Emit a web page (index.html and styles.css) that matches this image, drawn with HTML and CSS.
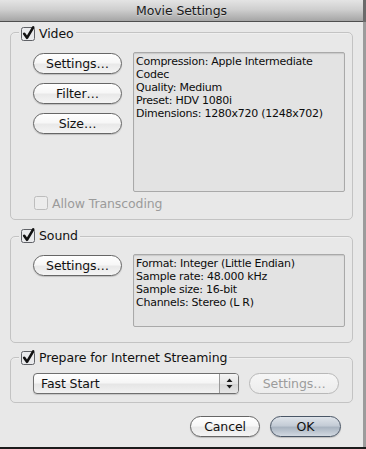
FILE: index.html
```html
<!DOCTYPE html>
<html>
<head>
<meta charset="utf-8">
<link rel="stylesheet" href="styles.css">
</head>
<body>
<div class="screen">
  <div class="window">
    <div class="titlebar">Movie Settings</div>
    <div class="content">
      <div class="group group-video">
        <div class="legend">
          <svg class="cb" width="14" height="14" viewBox="0 0 14 14"><rect x="0.5" y="0.5" width="13" height="13" rx="2" class="cb-box"/><path d="M3.2 6.8 L6 10.8 L12.2 0.4" class="cb-check"/></svg>
          <span class="legend-text">Video</span>
        </div>
        <div class="row">
          <div class="btncol">
            <div class="btn">Settings…</div>
            <div class="btn">Filter…</div>
            <div class="btn">Size…</div>
          </div>
          <div class="info info-video">Compression: Apple Intermediate<br>Codec<br>Quality: Medium<br>Preset: HDV 1080i<br>Dimensions: 1280x720 (1248x702)</div>
        </div>
        <div class="check disabled">
          <svg class="cb" width="14" height="14" viewBox="0 0 14 14"><rect x="0.5" y="0.5" width="13" height="13" rx="2" class="cb-box-dis"/></svg>
          <span>Allow Transcoding</span>
        </div>
      </div>

      <div class="group group-sound">
        <div class="legend">
          <svg class="cb" width="14" height="14" viewBox="0 0 14 14"><rect x="0.5" y="0.5" width="13" height="13" rx="2" class="cb-box"/><path d="M3.2 6.8 L6 10.8 L12.2 0.4" class="cb-check"/></svg>
          <span class="legend-text">Sound</span>
        </div>
        <div class="row">
          <div class="btncol">
            <div class="btn">Settings…</div>
          </div>
          <div class="info info-sound">Format: Integer (Little Endian)<br>Sample rate: 48.000 kHz<br>Sample size: 16-bit<br>Channels: Stereo (L R)</div>
        </div>
      </div>

      <div class="group group-stream">
        <div class="legend">
          <svg class="cb" width="14" height="14" viewBox="0 0 14 14"><rect x="0.5" y="0.5" width="13" height="13" rx="2" class="cb-box"/><path d="M3.2 6.8 L6 10.8 L12.2 0.4" class="cb-check"/></svg>
          <span class="legend-text">Prepare for Internet Streaming</span>
        </div>
        <div class="stream-row">
          <div class="popup">
            <span class="popup-label">Fast Start</span>
            <span class="popup-arrows">
              <svg width="7" height="11" viewBox="0 0 7 11"><path d="M3.5 0.5 L6.5 4 L0.5 4 Z M0.5 7 L6.5 7 L3.5 10.5 Z" fill="#1a1a1a"/></svg>
            </span>
          </div>
          <div class="btn btn-disabled">Settings…</div>
        </div>
      </div>

      <div class="actions">
        <div class="btn btn-cancel">Cancel</div>
        <div class="btn btn-ok">OK</div>
      </div>
    </div>
  </div>
  <div class="bottom-edge"></div>
</div>
</body>
</html>
```

FILE: styles.css
```css
* { box-sizing: border-box; }

html, body {
  margin: 0;
  padding: 0;
}

body {
  width: 366px;
  height: 449px;
  overflow: hidden;
  background: linear-gradient(to bottom, #6a6a6a 0, #6a6a6a 22px, #9c9c9c 22px, #9c9c9c 100%);
  font-family: "DejaVu Sans", sans-serif;
  color: #111;
}

.screen {
  display: flex;
  flex-direction: column;
  height: 449px;
}

.window {
  width: 363px;
  height: 447px;
  background: #e8e8e8;
  display: flex;
  flex-direction: column;
}

.bottom-edge {
  height: 2px;
  background: #1c1c1c;
}

.titlebar {
  height: 22px;
  border-bottom: 1px solid #4f4f4f;
  background: linear-gradient(to bottom, #e4e4e4 0%, #cfcfcf 45%, #a5a5a5 100%);
  text-align: center;
  font-size: 12.5px;
  letter-spacing: -0.1px;
  line-height: 21px;
  color: #1a1a1a;
  text-shadow: 0 1px 0 rgba(255, 255, 255, 0.35);
}

.content {
  padding: 0 10px 0 10px;
  display: flex;
  flex-direction: column;
}

.group {
  border: 1px solid #c3c3c3;
  border-radius: 5px;
  padding: 0 7px 0 22px;
  display: flex;
  flex-direction: column;
  box-shadow: inset 0 1px 0 rgba(255,255,255,0.3);
}

.group-video { margin-top: 10px; padding-bottom: 9px; }
.group-sound { margin-top: 16px; padding-bottom: 15px; }
.group-stream { margin-top: 14px; padding-bottom: 8px; padding-right: 13px; }

.legend {
  align-self: flex-start;
  display: flex;
  align-items: center;
  height: 14px;
  margin-left: -14px;
  padding: 0 2px;
  background: #e8e8e8;
  font-size: 12.5px;
  letter-spacing: -0.1px;
}

.group-video .legend { margin-top: -6px; }
.group-sound .legend { margin-top: -8px; }
.group-stream .legend { margin-top: -7px; }

.legend-text {
  margin-left: 4px;
  line-height: 14px;
}

.cb {
  display: block;
  overflow: visible;
  flex: none;
}

.cb-box {
  fill: #e9eaec;
  stroke: #5f6166;
  stroke-width: 1;
}

.cb-box-dis {
  fill: #ececec;
  stroke: #bdbdbd;
  stroke-width: 1;
}

.cb-check {
  fill: none;
  stroke: #111;
  stroke-width: 2.6;
  stroke-linecap: round;
  stroke-linejoin: round;
}

.row {
  display: flex;
  gap: 11px;
  margin-top: 11px;
}

.btncol {
  width: 89px;
  display: flex;
  flex-direction: column;
  gap: 9px;
  padding-top: 1px;
}

.btn {
  height: 21px;
  border: 1px solid #666;
  border-radius: 11px;
  background: linear-gradient(to bottom, #ffffff 0%, #f7f7f7 45%, #e9e9e9 55%, #f4f4f4 100%);
  box-shadow: 0 1px 1px rgba(0, 0, 0, 0.18);
  font-size: 12.5px;
  letter-spacing: -0.1px;
  line-height: 19px;
  text-align: center;
  color: #111;
}

.info {
  width: 212px;
  border: 1px solid #a9a9a9;
  border-radius: 2px;
  background: #e3e3e3;
  box-shadow: inset 0 1px 1px rgba(0, 0, 0, 0.12);
  padding: 2px 0 0 2px;
  font-size: 11px;
  letter-spacing: -0.25px;
  line-height: 13px;
  color: #0c0c0c;
}

.info-video { height: 140px; }
.info-sound { height: 73px; }

.check {
  display: flex;
  align-items: center;
  margin-top: 4px;
  margin-left: 1px;
  height: 14px;
  font-size: 12.5px;
  letter-spacing: -0.1px;
}

.check span { margin-left: 4px; }

.disabled { color: #9b9b9b; }

.stream-row {
  display: flex;
  gap: 10px;
  margin-top: 8px;
}

.popup {
  width: 207px;
  height: 21px;
  border: 1px solid #6f6f6f;
  border-radius: 4px;
  background: linear-gradient(to bottom, #ffffff 0%, #f6f6f6 45%, #e6e6e6 55%, #f2f2f2 100%);
  box-shadow: 0 1px 1px rgba(0, 0, 0, 0.15);
  display: flex;
  align-items: stretch;
  font-size: 12.5px;
  letter-spacing: -0.1px;
}

.popup-label {
  flex: 1;
  padding-left: 7px;
  line-height: 19px;
}

.popup-arrows {
  width: 19px;
  border-left: 1px solid #9a9a9a;
  display: flex;
  align-items: center;
  justify-content: center;
  border-radius: 0 3px 3px 0;
  background: linear-gradient(to bottom, #f4f4f4 0%, #e4e4e4 50%, #d4d4d4 51%, #e6e6e6 100%);
}

.btn-disabled {
  width: 90px;
  border-color: #b8b8b8;
  color: #9c9c9c;
  box-shadow: none;
  background: linear-gradient(to bottom, #f6f6f6, #ececec);
}

.actions {
  display: flex;
  justify-content: flex-end;
  gap: 10px;
  margin-top: 13px;
  padding-right: 12px;
}

.btn-cancel { width: 70px; }

.btn-ok {
  width: 71px;
  border-color: #4a5666;
  background: linear-gradient(to bottom, #dfe4ea 0%, #c4ccd6 45%, #a9b4c1 55%, #d2d9e1 100%);
}
```
